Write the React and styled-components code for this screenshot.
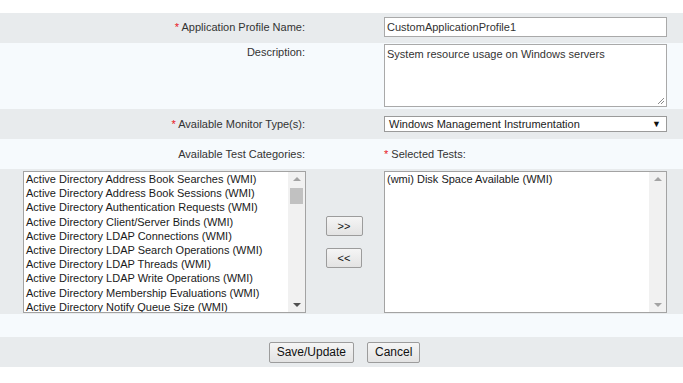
import React from "react";
import styled, { createGlobalStyle } from "styled-components";

const GlobalStyle = createGlobalStyle`
  body {
    margin: 0;
    background: #fff;
    font-family: "Liberation Sans", Arial, sans-serif;
    font-size: 11px;
    color: #333;
  }
`;

const Page = styled.div`
  padding-top: 13px;
  width: 683px;
`;

const Row = styled.div`
  display: grid;
  grid-template-columns: 310px 74px 283px 1fr;
  align-items: ${(p) => p.$align || "center"};
  background: ${(p) => (p.$shade ? "#e8ebed" : "#f6fafd")};
  padding: ${(p) => p.$pad || "0"};
  min-height: ${(p) => p.$h || 0}px;
  box-sizing: border-box;
`;

const Label = styled.div`
  grid-column: 1;
  text-align: right;
  padding-right: 5px;
  line-height: 13px;
  padding-top: ${(p) => p.$top || 0}px;
  color: #333;
`;

const Star = styled.span`
  color: #e8121c;
`;

const Field = styled.div`
  grid-column: ${(p) => p.$col || 3};
  line-height: 13px;
  position: relative;
`;

const TextInput = styled.div`
  height: 20px;
  box-sizing: border-box;
  border: 1px solid #a9a9a9;
  background: #fff;
  padding: 0 2px;
  line-height: 18px;
  color: #333;
`;

const TextArea = styled.div`
  height: 63px;
  box-sizing: border-box;
  border: 1px solid #a9a9a9;
  background: #fff;
  padding: 3px 2px;
  line-height: 13px;
  color: #333;
  position: relative;
`;

const Grip = styled.svg`
  position: absolute;
  right: 1px;
  bottom: 1px;
`;

const Select = styled.div`
  height: 16px;
  box-sizing: border-box;
  border: 1px solid #9a9a9a;
  background: #fff;
  padding: 0 4px;
  line-height: 14px;
  color: #222;
  display: flex;
  justify-content: space-between;
  align-items: center;
`;

const Caret = styled.span`
  font-size: 9px;
  color: #111;
  margin-right: 1px;
`;

const ListBox = styled.div`
  height: 142px;
  width: 283px;
  box-sizing: border-box;
  border: 1px solid #a3a3a3;
  background: #fff;
  display: flex;
  overflow: hidden;
  justify-self: ${(p) => (p.$left ? "end" : "start")};
  margin-right: ${(p) => (p.$left ? "4px" : "0")};
`;

const Options = styled.div`
  flex: 1;
  padding-left: 2px;
  overflow: hidden;
  white-space: nowrap;
`;

const Option = styled.div`
  height: 14.2px;
  line-height: 14.2px;
  color: #1a1a1a;
`;

const Track = styled.div`
  width: 17px;
  background: #f1f1f1;
  position: relative;
  flex-shrink: 0;
`;

const Arrow = styled.div`
  position: absolute;
  left: 5px;
  width: 0;
  height: 0;
  border-left: 4px solid transparent;
  border-right: 4px solid transparent;
  ${(p) =>
    p.$up
      ? `top: 5px; border-bottom: 4px solid ${p.$dark ? "#505050" : "#a3a3a3"};`
      : `bottom: 5px; border-top: 4px solid ${p.$dark ? "#505050" : "#a3a3a3"};`}
`;

const Thumb = styled.div`
  position: absolute;
  left: 2px;
  top: 16px;
  width: 13px;
  height: 16px;
  background: #c1c1c1;
`;

const MoveColumn = styled.div`
  grid-column: 2;
  display: flex;
  flex-direction: column;
  align-items: center;
  justify-content: center;
  gap: 12px;
  padding-right: 6px;
  align-self: stretch;
`;

const Button = styled.button`
  font-family: "Liberation Sans", Arial, sans-serif;
  font-size: ${(p) => (p.$small ? "11px" : "12px")};
  color: #111;
  height: ${(p) => (p.$small ? "20px" : "21px")};
  width: ${(p) => (p.$w ? `${p.$w}px` : "auto")};
  padding: 0 7px;
  border: 1px solid #9c9c9c;
  border-radius: 2px;
  background: linear-gradient(#f5f5f5, #e3e3e3);
  line-height: 1;
  cursor: pointer;
`;

const Actions = styled.div`
  grid-column: 1 / -1;
  display: flex;
  justify-content: center;
  gap: 13px;
  padding-left: 6px;
`;

const available = [
  "Active Directory Address Book Searches (WMI)",
  "Active Directory Address Book Sessions (WMI)",
  "Active Directory Authentication Requests (WMI)",
  "Active Directory Client/Server Binds (WMI)",
  "Active Directory LDAP Connections (WMI)",
  "Active Directory LDAP Search Operations (WMI)",
  "Active Directory LDAP Threads (WMI)",
  "Active Directory LDAP Write Operations (WMI)",
  "Active Directory Membership Evaluations (WMI)",
  "Active Directory Notify Queue Size (WMI)",
];

const selected = ["(wmi) Disk Space Available (WMI)"];

function Scrollbar({ active }) {
  return (
    <Track>
      <Arrow $up />
      {active && <Thumb />}
      <Arrow $dark={active} />
    </Track>
  );
}

export default function App() {
  return (
    <Page>
      <GlobalStyle />
      <Row $shade $pad="4px 0 6px">
        <Label>
          <Star>*</Star> Application Profile Name:
        </Label>
        <Field>
          <TextInput>CustomApplicationProfile1</TextInput>
        </Field>
      </Row>
      <Row $align="start" $pad="1px 0 2px">
        <Label $top={2}>Description:</Label>
        <Field>
          <TextArea>
            System resource usage on Windows servers
            <Grip width="9" height="9" viewBox="0 0 9 9">
              <path d="M8 2 L2 8 M8 5 L5 8" stroke="#8a8a8a" strokeWidth="1" />
            </Grip>
          </TextArea>
        </Field>
      </Row>
      <Row $shade $pad="7px 0">
        <Label>
          <Star>*</Star> Available Monitor Type(s):
        </Label>
        <Field>
          <Select>
            <span>Windows Management Instrumentation</span>
            <Caret>▼</Caret>
          </Select>
        </Field>
      </Row>
      <Row $h={30}>
        <Label>Available Test Categories:</Label>
        <Field>
          <Star>*</Star> Selected Tests:
        </Field>
      </Row>
      <Row $shade $pad="2px 0 1px" $align="start">
        <ListBox $left>
          <Options>
            {available.map((t) => (
              <Option key={t}>{t}</Option>
            ))}
          </Options>
          <Scrollbar active />
        </ListBox>
        <MoveColumn>
          <Button $small $w={37}>&gt;&gt;</Button>
          <Button $small $w={36}>&lt;&lt;</Button>
        </MoveColumn>
        <Field>
          <ListBox>
            <Options>
              {selected.map((t) => (
                <Option key={t}>{t}</Option>
              ))}
            </Options>
            <Scrollbar />
          </ListBox>
        </Field>
      </Row>
      <Row $h={23} />
      <Row $shade $h={30}>
        <Actions>
          <Button>Save/Update</Button>
          <Button>Cancel</Button>
        </Actions>
      </Row>
    </Page>
  );
}
